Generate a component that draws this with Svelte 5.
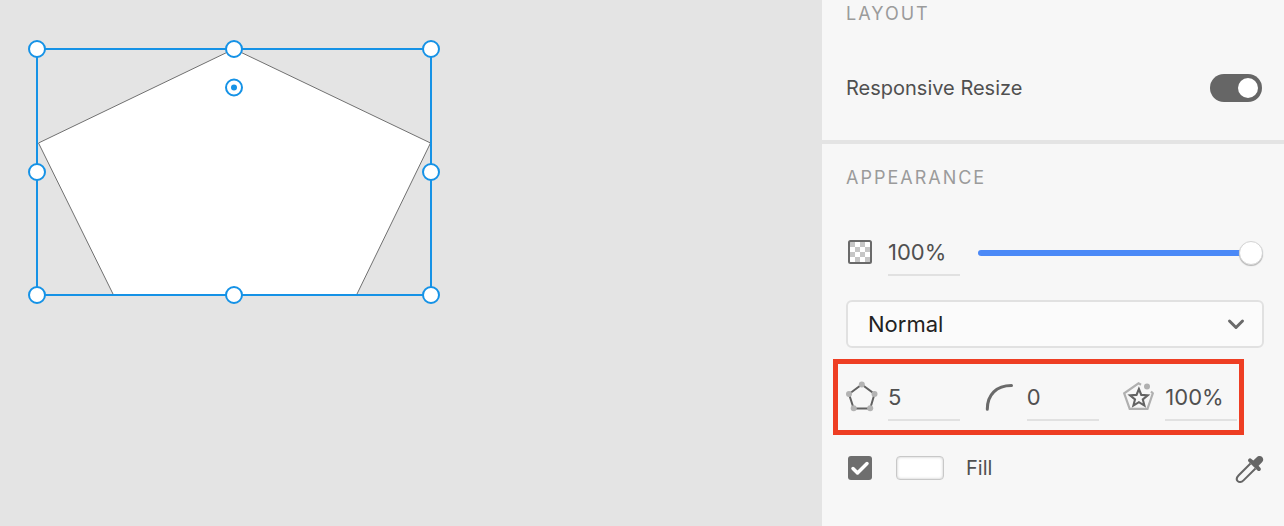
<script>
  let responsive = $state(true);
  let opacity = $state(100);
  let blend = $state('Normal');
  let corners = $state('5');
  let radius = $state('0');
  let starRatio = $state('100%');
  let fillOn = $state(true);

  const handles = [
    [37, 49], [234, 49], [431, 49],
    [37, 172], [431, 172],
    [37, 295], [234, 295], [431, 295]
  ];
</script>

<div class="app">
  <main class="canvas" aria-label="Canvas">
    <svg class="shape" width="470" height="330" viewBox="0 0 470 330" role="img" aria-label="Selected polygon">
      <polygon points="234,49 430.5,143 356.5,295 113.5,295 38.5,143" fill="#fff" stroke="#707070" stroke-width="1" />
      <rect x="37" y="49" width="394" height="246" fill="none" stroke="#1592e6" stroke-width="2" />
      {#each handles as [x, y]}
        <circle cx={x} cy={y} r="8" fill="#fff" stroke="#1592e6" stroke-width="2" />
      {/each}
      <circle cx="234" cy="87.5" r="8" fill="#fff" stroke="#1592e6" stroke-width="2" />
      <circle cx="234" cy="87.5" r="3" fill="#1592e6" />
    </svg>
  </main>

  <aside class="panel">
    <section class="layout">
      <h2>LAYOUT</h2>
      <div class="row resize">
        <label for="responsive">Responsive Resize</label>
        <input id="responsive" class="toggle" type="checkbox" role="switch" bind:checked={responsive} />
      </div>
    </section>

    <section class="appearance">
      <h2>APPEARANCE</h2>

      <div class="row opacity">
        <label class="icon" for="opacity" aria-label="Opacity">
          <svg width="32" height="32" viewBox="0 0 32 32">
            <rect x="3" y="5" width="22" height="22" rx="1" fill="#fff" />
            <path fill="#c6c6c6" d="M4 6h5v5H4zM14 6h5v5h-5zM9 11h5v5H9zM19 11h5v5h-5zM4 16h5v5H4zM14 16h5v5h-5zM9 21h5v5H9zM19 21h5v5h-5z" />
            <rect x="3" y="5" width="22" height="22" rx="1.5" fill="none" stroke="#6a6a6a" stroke-width="2" />
          </svg>
        </label>
        <input id="opacity" class="field" type="text" value="{opacity}%" />
        <input class="slider" type="range" min="0" max="100" bind:value={opacity} aria-label="Opacity slider"
          style="--level: {opacity}%" />
      </div>

      <div class="select">
        <select bind:value={blend} aria-label="Blend mode">
          <option>Normal</option>
          <option>Multiply</option>
          <option>Screen</option>
        </select>
        <svg class="chevron" width="18" height="12" viewBox="0 0 18 12" aria-hidden="true">
          <path d="M2.5 3 9 9.500l6.500-6.500" fill="none" stroke="#6a6a6a" stroke-width="3" stroke-linecap="round" stroke-linejoin="round" />
        </svg>
      </div>

      <div class="polygon">
        <div class="cell">
          <label class="icon" for="corners" aria-label="Corner count">
            <svg width="32" height="32" viewBox="0 0 32 32">
              <path d="M15.800 3.500 28.500 13 24.200 27.500H7.700L3 13z" fill="none" stroke="#606060" stroke-width="2" />
              <g fill="#b3b3b3">
                <circle cx="15.800" cy="3.500" r="3" /><circle cx="28.500" cy="13" r="3" />
                <circle cx="24.200" cy="27.300" r="3" /><circle cx="7.700" cy="27.300" r="3" />
                <circle cx="3" cy="13" r="3" />
              </g>
            </svg>
          </label>
          <input id="corners" class="field" type="text" bind:value={corners} />
        </div>
        <div class="cell">
          <label class="icon" for="radius" aria-label="Corner radius">
            <svg width="32" height="32" viewBox="0 0 32 32">
              <path d="M2.300 28.300C2.300 13.500 11.500 4.500 26.500 4.500" fill="none" stroke="#6a6a6a" stroke-width="3" stroke-linecap="round" />
            </svg>
          </label>
          <input id="radius" class="field" type="text" bind:value={radius} />
        </div>
        <div class="cell">
          <label class="icon" for="ratio" aria-label="Star ratio">
            <svg width="32" height="32" viewBox="0 0 32 32">
              <path d="M18 3.800 15.500 2.300 1.200 12.300 6.700 27.800H24.500L29.800 12.300 28 10.500" fill="none" stroke="#b0b0b0" stroke-width="2.200" />
              <circle cx="24" cy="5.500" r="3" fill="#b0b0b0" />
              <path d="M15.900 8 18.300 13.900 24.700 14.300 19.800 18.400 21.400 24.600 15.900 21.200 10.400 24.600 12 18.400 7.100 14.300 13.500 13.900z" fill="none" stroke="#636363" stroke-width="2.100" />
            </svg>
          </label>
          <input id="ratio" class="field" type="text" bind:value={starRatio} />
        </div>
      </div>

      <div class="row fill">
        <input id="fill" class="check" type="checkbox" bind:checked={fillOn} />
        <button class="swatch" type="button" aria-label="Fill colour"></button>
        <label for="fill">Fill</label>
        <button class="dropper" type="button" aria-label="Pick colour">
          <svg width="30" height="32" viewBox="0 0 30 32">
            <path d="M16.500 11.500 4.500 23.500C2.300 25.800 2.400 27.800 3.700 29.100S7.300 30.600 9.500 28.400L21.500 16.500" fill="none" stroke="#666" stroke-width="2" />
            <path d="M14.600 6.900c.8-.8 2-.8 2.800 0l1.900 1.700 3.200-3.200c4-4 9.300 1.200 5.300 5.200L24.600 13.800l1.700 1.900c.8.800.8 2 0 2.800s-2 .8-2.800 0L14.600 9.700c-.8-.8-.8-2 0-2.800z" fill="#666" />
          </svg>
        </button>
      </div>
    </section>
  </aside>
</div>

<style>
  :global(body) { margin: 0; background: #e4e4e4; }
  .app {
    display: flex;
    min-height: 100vh;
    font-family: Inter, "Liberation Sans", sans-serif;
    font-size: 20px;
    line-height: 24px;
    color: #505050;
  }
  .canvas { flex: 1; min-width: 0; overflow: hidden; background: #e4e4e4; }
  .shape { display: block; }
  .panel { flex: 0 0 462px; box-sizing: border-box; background: #f7f7f7; }
  section { padding: 0 20px 0 24px; }
  .layout { padding-top: 2px; padding-bottom: 38px; border-bottom: 4px solid #e4e4e4; }
  .appearance { padding-top: 22px; }
  h2 {
    margin: 0;
    font-size: 18px;
    font-weight: 400;
    line-height: 24px;
    letter-spacing: 2px;
    color: #9b9b9b;
  }
  .row { display: flex; align-items: center; }
  input, select, button { margin: 0; font-family: inherit; color: inherit; }
  .resize { justify-content: space-between; margin-top: 48px; padding-right: 2px; }
  .toggle {
    appearance: none;
    display: flex;
    width: 52px;
    height: 28px;
    padding: 4px;
    box-sizing: border-box;
    border-radius: 14px;
    background: #b0b0b0;
  }
  .toggle::before { content: ""; width: 20px; height: 20px; border-radius: 50%; background: #fff; }
  .toggle:checked { justify-content: flex-end; background: #666; }
  .icon { display: block; flex: none; width: 32px; height: 32px; padding-bottom: 2px; }
  .icon svg { display: block; }
  .field {
    width: 72px;
    height: 46px;
    padding: 0;
    box-sizing: border-box;
    border: 0;
    border-bottom: 2px solid #e1e1e1;
    background: none;
    font-size: 22px;
  }
  .opacity { margin-top: 40px; padding-right: 1px; }
  .opacity .field { margin: 0 18px 0 10px; }
  .slider {
    appearance: none;
    flex: 1;
    min-width: 0;
    height: 24px;
    background: none;
  }
  .slider::-webkit-slider-runnable-track {
    height: 6px;
    border-radius: 3px;
    background: linear-gradient(to right, #4b89f7 var(--level), #d5d5d5 var(--level));
  }
  .slider::-webkit-slider-thumb {
    appearance: none;
    width: 24px;
    height: 24px;
    margin-top: -9px;
    border: 1px solid #d4d4d4;
    border-radius: 50%;
    background: #fff;
    box-shadow: 0 1px 1px #b5b5b5;
  }
  .select { display: grid; align-items: center; margin-top: 24px; }
  .select > * { grid-area: 1 / 1; }
  select {
    appearance: none;
    width: 100%;
    height: 48px;
    padding: 0 48px 0 20px;
    border: 2px solid #e1e1e1;
    border-radius: 6px;
    background: #fbfbfb;
    font-size: 22px;
    color: #222;
  }
  .chevron { justify-self: end; margin-right: 19px; pointer-events: none; }
  .polygon {
    position: relative;
    display: grid;
    grid-template-columns: repeat(3, 1fr);
    margin: 27px 2px 0 0;
  }
  .polygon::after {
    content: "";
    position: absolute;
    inset: -16px 18px -14px -13px;
    border: 5px solid #ee3e23;
    pointer-events: none;
  }
  .cell { display: flex; align-items: center; gap: 10px; }
  .fill { margin-top: 31px; padding-left: 2px; }
  .check {
    appearance: none;
    width: 24px;
    height: 24px;
    border-radius: 3px;
    background: #fff;
    box-shadow: inset 0 0 0 2px #6e6e6e;
  }
  .check:checked {
    background: #6e6e6e url("data:image/svg+xml,%3Csvg xmlns='http://www.w3.org/2000/svg' viewBox='0 0 24 24'%3E%3Cpath d='M5 12.500l4.500 4.500L19 7.500' fill='none' stroke='white' stroke-width='3.500' stroke-linecap='round' stroke-linejoin='round'/%3E%3C/svg%3E");
  }
  .swatch {
    width: 48px;
    height: 24px;
    margin: 0 22px 0 24px;
    border: 1px solid #c8c8c8;
    border-radius: 4px;
    background: #fff;
    box-shadow: inset 0 0 3px #c4c4c4;
  }
  .dropper { display: flex; width: 30px; height: 32px; margin-left: auto; padding: 0; border: 0; background: none; }
</style>
